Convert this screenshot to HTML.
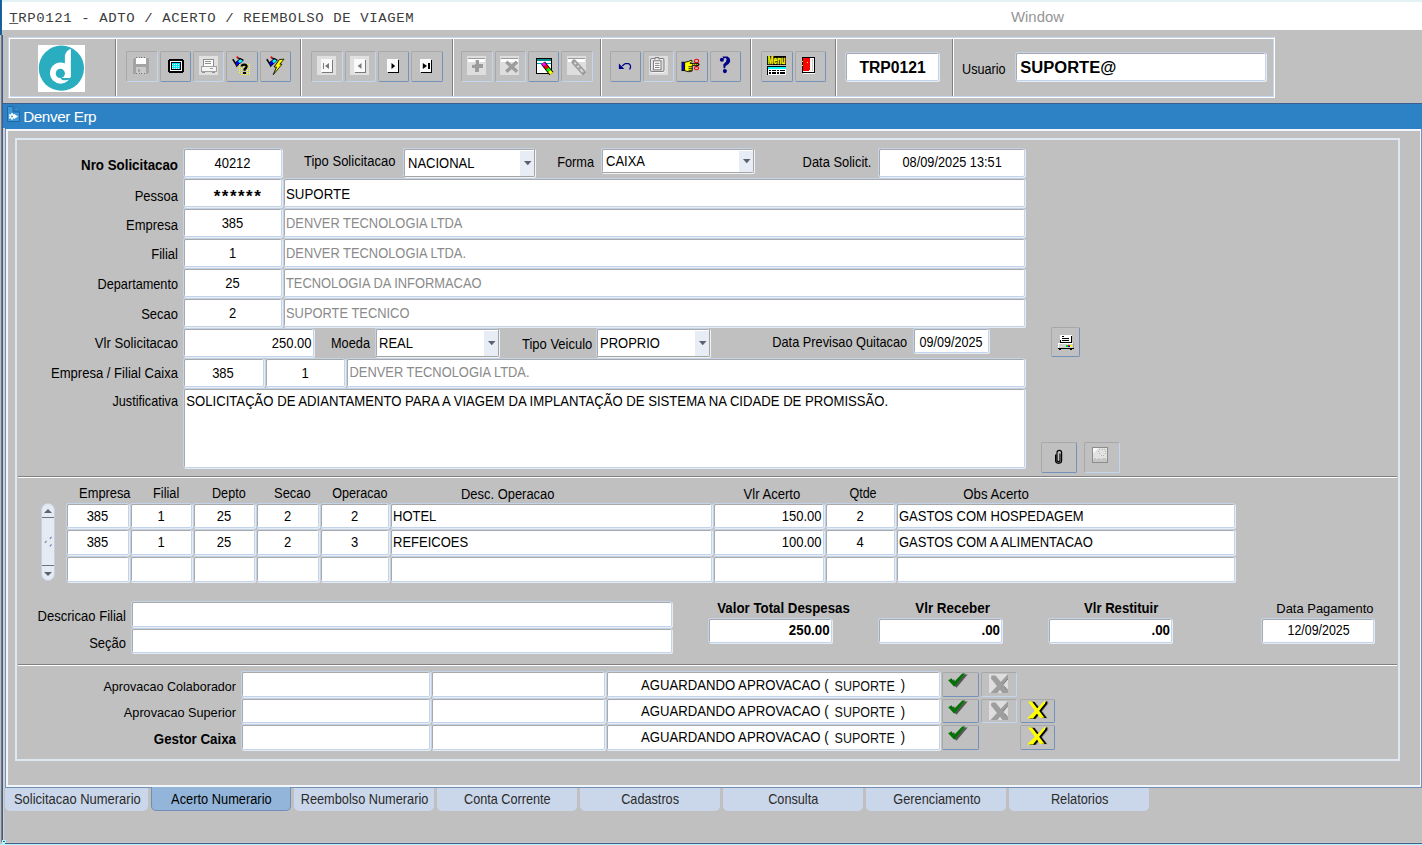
<!DOCTYPE html><html><head><meta charset="utf-8"><style>
*{margin:0;padding:0}
html,body{width:1422px;height:845px;overflow:hidden;background:#c0c0c0;position:relative}
.f{position:absolute;box-sizing:border-box;background:#fff;border:1px solid #c3d3ea;border-radius:2px;box-shadow:inset 1px 1px 0 #a9a9a9, 1px 1px 0 #e6ecf4}
.cb{border-right-color:#a4a4a4;border-bottom-color:#a4a4a4;box-shadow:inset 1px 1px 0 #a9a9a9, 1px 1px 0 #f0f3f8}
.b{position:absolute;box-sizing:border-box;border-radius:2px;border-top:1px solid #a8a8a8;border-left:1px solid #a8a8a8}
.bd{border-right:1px solid #c3d5ef;border-bottom:1px solid #c3d5ef}
.be{border-right:1px solid #7391b9;border-bottom:1px solid #7391b9}
.b svg{position:absolute}
.vs{position:absolute;top:39px;width:1px;height:57px;background:#808080;box-shadow:1px 0 0 #fff}
</style></head><body><div style="position:absolute;left:0px;top:0px;width:1422px;height:2px;background:#e3f3f5"></div>
<div style="position:absolute;left:0px;top:2px;width:1422px;height:28px;background:#fff"></div>
<div style="position:absolute;left:0px;top:0px;width:1px;height:35px;background:#0562b2"></div>
<div style="position:absolute;left:1px;top:0px;width:1px;height:35px;background:#2f5f88"></div>
<div style="position:absolute;left:1px;top:35px;width:1px;height:807px;background:#6c7c90"></div>
<div style="position:absolute;left:0px;top:844px;width:1422px;height:1px;background:#b2f6fd"></div>
<div style="position:absolute;left:3px;top:842px;width:1419px;height:1px;background:#cbc9c6"></div>
<div style="position:absolute;left:2px;top:840px;width:4px;height:4px;background:#b2f6fd"></div>
<div style="position:absolute;left:4px;top:843px;width:1418px;height:1px;background:#3f5d8c"></div>
<div style="position:absolute;top:11.05px;font:normal 14px/14px 'Liberation Mono';color:#3c3c3c;white-space:pre;letter-spacing:0.6px;transform:scaleY(0.85);transform-origin:0 11.85px;left:9.3px"><span style="text-decoration:underline">T</span>RP0121 - ADTO / ACERTO / REEMBOLSO DE VIAGEM</div>
<div style="position:absolute;top:10.29px;font:normal 14.9px/14.9px 'Liberation Sans';color:#959595;white-space:pre;transform:scaleY(1.04);transform-origin:0 12.61px;left:1011px">Window</div>
<div style="position:absolute;left:8px;top:37px;width:1267px;height:61px;box-sizing:border-box;border-top:1px solid #c5d6ee;border-left:1px solid #c5d6ee;border-right:1px solid #fff;border-bottom:1px solid #fff;box-shadow:inset 1px 1px 0 #fff, inset -1px -1px 0 #c5d6ee"></div>
<div class="vs" style="left:115px"></div>
<div class="vs" style="left:300px"></div>
<div class="vs" style="left:452px"></div>
<div class="vs" style="left:600px"></div>
<div class="vs" style="left:750px"></div>
<div class="vs" style="left:835px"></div>
<div class="vs" style="left:952px"></div>
<svg style="position:absolute;left:38px;top:45px" width="47" height="47" viewBox="0 0 47 47">
<rect width="47" height="47" fill="#fff"/>
<circle cx="23.4" cy="23.2" r="22.6" fill="#2badc0"/>
<circle cx="22.6" cy="28.1" r="10.6" fill="#fff"/>
<path d="M26.9,18 L26.9,10.5 Q28.3,5.6 32.9,3.8 L32.9,31 Q32.9,33 30.8,33 L26.9,33 Z" fill="#fff"/>
<rect x="32.9" y="16" width="2" height="15" fill="#2badc0"/>
<circle cx="22.3" cy="28.4" r="4.6" fill="#2badc0"/>
<path d="M22.3,33 L31.5,33 Q32.6,33.2 31.8,34.2 Q28.5,35.8 24.2,34.9 Z" fill="#2badc0"/>
</svg>
<div class="b bd" style="left:126px;top:51px;width:32px;height:31px"></div>
<svg style="position:absolute;left:133px;top:57px;overflow:visible" width="16" height="17" viewBox="0 0 16 17" shape-rendering="crispEdges"><rect x="0" y="1" width="16" height="16" rx="2" fill="#a3a3a3"/><rect x="3" y="1" width="10" height="6" fill="#fff"/><rect x="3" y="10" width="10" height="7" fill="#c9c9c9"/><rect x="5" y="12" width="2" height="3" fill="#a3a3a3"/><path d="M3 0.5h10M3 16.5h10" stroke="#707070" stroke-dasharray="1 1.5"/></svg>
<div class="b be" style="left:160px;top:51px;width:31px;height:31px"></div>
<svg style="position:absolute;left:168px;top:59px;overflow:visible" width="16" height="14" viewBox="0 0 16 14" shape-rendering="crispEdges"><rect x="1" y="1" width="14" height="12" rx="2" fill="#fff" stroke="#000" stroke-width="2"/><rect x="3.5" y="3.5" width="9" height="7" fill="#00e8ff" stroke="#000" stroke-width="1"/><path d="M4 5h8M4 7h8M4 9h8" stroke="#fff" stroke-dasharray="1 1"/></svg>
<div class="b bd" style="left:193px;top:51px;width:31px;height:31px"></div>
<svg style="position:absolute;left:199px;top:56px;overflow:visible" width="19" height="19" viewBox="0 0 19 19" shape-rendering="crispEdges"><rect width="19" height="19" fill="#e0e0e0"/><rect x="4" y="3" width="10" height="7" fill="#fff" stroke="#8c8c8c" stroke-width="1"/><path d="M6 5.5h6M6 7.5h6" stroke="#909090"/><rect x="2" y="10" width="15" height="5" fill="#f4f4f4" stroke="#a0a0a0"/><path d="M3 16h3M13 16h3" stroke="#909090"/><path d="M11 12.5h3" stroke="#a0a0a0"/></svg>
<div class="b be" style="left:226px;top:51px;width:32px;height:31px"></div>
<svg style="position:absolute;left:227px;top:51px;overflow:visible" width="31" height="31" viewBox="0 0 31 31" shape-rendering="crispEdges"><g shape-rendering="auto"><path d="M5.8 8.2 L8.6 12.6" stroke="#000" stroke-width="1.6"/><path d="M8.2 12 L9.6 15.6 L16.2 9.2 L13.2 7.6 Z" fill="#0000ff" stroke="#000" stroke-width="1"/><path d="M11.2 10.2 L13.4 8 L15.8 9.4 L12.8 12.2 Z" fill="#00ffff"/><path d="M10 6.6 L13.4 7.8 L16.4 9.2" fill="none" stroke="#000" stroke-width="1.2"/><circle cx="10.4" cy="6.3" r="1" fill="#ff0000"/></g><rect x="12" y="13" width="1" height="1" fill="#ffff00"/><rect x="12" y="15" width="1" height="1" fill="#ffff00"/><rect x="12" y="17" width="1" height="1" fill="#ffff00"/><rect x="12" y="19" width="1" height="1" fill="#ffff00"/><rect x="12" y="21" width="1" height="1" fill="#ffff00"/><rect x="14" y="13" width="1" height="1" fill="#ffff00"/><rect x="14" y="15" width="1" height="1" fill="#ffff00"/><rect x="14" y="17" width="1" height="1" fill="#ffff00"/><rect x="14" y="19" width="1" height="1" fill="#ffff00"/><rect x="14" y="21" width="1" height="1" fill="#ffff00"/><rect x="14" y="23" width="1" height="1" fill="#ffff00"/><rect x="16" y="13" width="1" height="1" fill="#ffff00"/><rect x="16" y="15" width="1" height="1" fill="#ffff00"/><rect x="16" y="17" width="1" height="1" fill="#ffff00"/><rect x="16" y="19" width="1" height="1" fill="#ffff00"/><rect x="16" y="21" width="1" height="1" fill="#ffff00"/><rect x="16" y="23" width="1" height="1" fill="#ffff00"/><rect x="18" y="13" width="1" height="1" fill="#ffff00"/><rect x="18" y="15" width="1" height="1" fill="#ffff00"/><rect x="18" y="17" width="1" height="1" fill="#ffff00"/><rect x="18" y="19" width="1" height="1" fill="#ffff00"/><rect x="18" y="21" width="1" height="1" fill="#ffff00"/><rect x="18" y="23" width="1" height="1" fill="#ffff00"/><rect x="20" y="13" width="1" height="1" fill="#ffff00"/><rect x="20" y="15" width="1" height="1" fill="#ffff00"/><rect x="20" y="17" width="1" height="1" fill="#ffff00"/><rect x="20" y="19" width="1" height="1" fill="#ffff00"/><rect x="20" y="21" width="1" height="1" fill="#ffff00"/><rect x="20" y="23" width="1" height="1" fill="#ffff00"/><rect x="22" y="13" width="1" height="1" fill="#ffff00"/><rect x="22" y="15" width="1" height="1" fill="#ffff00"/><rect x="22" y="17" width="1" height="1" fill="#ffff00"/><rect x="22" y="19" width="1" height="1" fill="#ffff00"/><rect x="22" y="21" width="1" height="1" fill="#ffff00"/><rect x="22" y="23" width="1" height="1" fill="#ffff00"/><path d="M14.8 15.6 Q14.8 13.6 17.2 13.6 Q19.6 13.6 19.6 15.6 Q19.6 17 17.6 18.2 L17.6 19.8" fill="none" stroke="#000" stroke-width="2.3" shape-rendering="auto"/><rect x="16.4" y="21" width="2.4" height="2" fill="#000"/></svg>
<div class="b be" style="left:260px;top:51px;width:31px;height:31px"></div>
<svg style="position:absolute;left:261px;top:51px;overflow:visible" width="31" height="31" viewBox="0 0 31 31" shape-rendering="crispEdges"><g shape-rendering="auto"><path d="M5.8 8.2 L8.6 12.6" stroke="#000" stroke-width="1.6"/><path d="M8.2 12 L9.6 15.6 L16.2 9.2 L13.2 7.6 Z" fill="#0000ff" stroke="#000" stroke-width="1"/><path d="M11.2 10.2 L13.4 8 L15.8 9.4 L12.8 12.2 Z" fill="#00ffff"/><path d="M10 6.6 L13.4 7.8 L16.4 9.2" fill="none" stroke="#000" stroke-width="1.2"/><circle cx="10.4" cy="6.3" r="1" fill="#ff0000"/></g><g shape-rendering="auto"><path d="M17.5 8.5 L22 8.2 L17.8 13.2 L20 13.2 L11.3 23.7 L14.6 16 L12.2 16 Z" fill="#909090"/><path d="M18.5 8.5 L23 8.2 L18.8 13.2 L21 13.2 L12.3 23.7 L15.6 16 L13.2 16 Z" fill="#ffff00" stroke="#000" stroke-width="0.8"/></g></svg>
<div class="b bd" style="left:311px;top:51px;width:32px;height:31px"></div>
<svg style="position:absolute;left:317px;top:56px;overflow:visible" width="19" height="19" viewBox="0 0 19 19" shape-rendering="crispEdges"><rect width="19" height="19" fill="#e0e0e0"/><rect x="5" y="4" width="11" height="13" fill="#7a7a7a"/><rect x="4" y="3" width="11" height="13" fill="#fafafa"/><rect x="6" y="7" width="1" height="6" fill="#7a7a7a"/><g shape-rendering="auto"><path d="M12 7 L8 10 L12 13 Z" fill="#7a7a7a"/></g></svg>
<div class="b bd" style="left:345px;top:51px;width:31px;height:31px"></div>
<svg style="position:absolute;left:350px;top:56px;overflow:visible" width="19" height="19" viewBox="0 0 19 19" shape-rendering="crispEdges"><rect width="19" height="19" fill="#e0e0e0"/><rect x="5" y="4" width="11" height="13" fill="#7a7a7a"/><rect x="4" y="3" width="11" height="13" fill="#fafafa"/><g shape-rendering="auto"><path d="M11.5 7 L7.7 10 L11.5 13 Z" fill="#7a7a7a"/></g></svg>
<div class="b be" style="left:378px;top:51px;width:31px;height:31px"></div>
<svg style="position:absolute;left:383px;top:56px;overflow:visible" width="19" height="19" viewBox="0 0 19 19" shape-rendering="crispEdges"><rect x="5" y="4" width="11" height="13" fill="#000"/><rect x="4" y="3" width="11" height="13" fill="#fafafa"/><g shape-rendering="auto"><path d="M8.5 7 L12.2 10 L8.5 13 Z" fill="#000"/></g></svg>
<div class="b be" style="left:411px;top:51px;width:32px;height:31px"></div>
<svg style="position:absolute;left:416px;top:56px;overflow:visible" width="19" height="19" viewBox="0 0 19 19" shape-rendering="crispEdges"><rect x="5" y="4" width="11" height="13" fill="#000"/><rect x="4" y="3" width="11" height="13" fill="#fafafa"/><g shape-rendering="auto"><path d="M6.8 7 L11 10 L6.8 13 Z" fill="#000"/></g><rect x="12" y="7" width="1.5" height="6" fill="#000"/></svg>
<div class="b bd" style="left:461px;top:51px;width:32px;height:31px"></div>
<svg style="position:absolute;left:467px;top:56px;overflow:visible" width="19" height="19" viewBox="0 0 19 19" shape-rendering="crispEdges"><rect width="19" height="19" fill="#dedede"/><rect x="1" y="2" width="17" height="4" fill="#fff"/><rect x="1" y="2" width="17" height="1" fill="#9c9c9c"/><rect x="5" y="8" width="11" height="4" fill="#9c9c9c"/><rect x="8" y="4" width="4" height="12" fill="#9c9c9c"/><rect x="5" y="8" width="3" height="1" fill="#d4d4d4"/><rect x="8" y="4" width="1" height="4" fill="#d4d4d4"/></svg>
<div class="b bd" style="left:495px;top:51px;width:31px;height:31px"></div>
<svg style="position:absolute;left:500px;top:56px;overflow:visible" width="19" height="19" viewBox="0 0 19 19" shape-rendering="crispEdges"><rect width="19" height="19" fill="#dedede"/><rect x="1" y="2" width="17" height="4" fill="#fff"/><rect x="1" y="2" width="17" height="1" fill="#9c9c9c"/><path d="M7.5 7 L15.8 14.6 M15.8 7 L7.5 14.6" stroke="#9c9c9c" stroke-width="3.4" stroke-linecap="square" shape-rendering="auto"/></svg>
<div class="b be" style="left:528px;top:51px;width:31px;height:31px"></div>
<svg style="position:absolute;left:535px;top:58px;overflow:visible" width="19" height="19" viewBox="0 0 19 19" shape-rendering="crispEdges"><rect x="1" y="0.5" width="15" height="14.5" fill="#fff" stroke="#000"/><rect x="1.5" y="1" width="14" height="2.3" fill="#008b8b"/><rect x="1.5" y="4.8" width="14" height="1.5" fill="#00a0a0"/><g shape-rendering="auto"><path d="M8 5 L16.5 15.6" stroke="#000" stroke-width="5"/><path d="M8 5 L10.2 7.8" stroke="#ff00ff" stroke-width="3.3"/><path d="M10.2 7.8 L12.4 10.5" stroke="#ff0000" stroke-width="3.3"/><path d="M12.4 10.5 L14.4 13" stroke="#00ff00" stroke-width="3.3"/><path d="M14.4 13 L16.6 15.8" stroke="#ffff00" stroke-width="3.3"/></g></svg>
<div class="b bd" style="left:561px;top:51px;width:32px;height:31px"></div>
<svg style="position:absolute;left:567px;top:56px;overflow:visible" width="19" height="19" viewBox="0 0 19 19" shape-rendering="crispEdges"><rect width="19" height="19" fill="#dedede"/><rect x="1" y="2" width="17" height="4" fill="#fff"/><rect x="1" y="2" width="17" height="1" fill="#9c9c9c"/><g shape-rendering="auto"><path d="M7 6 L16.5 16.5" stroke="#9c9c9c" stroke-width="5" stroke-linecap="round"/><path d="M7.5 6.5 L16 16" stroke="#d8d8d8" stroke-width="2"/><path d="M9 8 L10.5 9.8 M12 11.2 L13.5 13" stroke="#9c9c9c" stroke-width="2.2"/></g></svg>
<div class="b be" style="left:610px;top:51px;width:31px;height:31px"></div>
<svg style="position:absolute;left:610px;top:51px;overflow:visible" width="31" height="31" viewBox="0 0 31 31" shape-rendering="crispEdges"><g shape-rendering="auto"><path d="M12.3 14.9 L14.6 13 L15.5 12.5 H18.7 L20.2 14 L20.6 16.2 L19.6 18.5" fill="none" stroke="#00008a" stroke-width="1.25"/><path d="M8.9 12.6 V18.1 H14.3 Z" fill="#00008a"/></g></svg>
<div class="b bd" style="left:643px;top:51px;width:31px;height:31px"></div>
<svg style="position:absolute;left:649px;top:56px;overflow:visible" width="19" height="19" viewBox="0 0 19 19" shape-rendering="crispEdges"><rect width="19" height="19" fill="#dedede"/><g shape-rendering="auto"><rect x="1.5" y="2.5" width="13.5" height="13" rx="1.5" fill="none" stroke="#fafafa" transform="translate(0.8,0.8)"/><rect x="1.5" y="2.5" width="13.5" height="13" rx="1.5" fill="none" stroke="#808080" stroke-width="1.1"/><path d="M5.5 3.5 L6.5 1.5 H9.5 L10.5 3.5" fill="#dedede" stroke="#808080" stroke-width="1.1"/><rect x="4.5" y="4.8" width="7.5" height="9" fill="#fff" stroke="#808080" stroke-width="1.1"/><path d="M6 7.3h4.5M6 9.4h4.5M6 11.5h4.5" stroke="#808080" stroke-width="1"/></g></svg>
<div class="b be" style="left:676px;top:51px;width:32px;height:31px"></div>
<svg style="position:absolute;left:681px;top:58px;overflow:visible" width="22" height="15" viewBox="0 0 22 15" shape-rendering="crispEdges"><g shape-rendering="auto"><rect x="1" y="4.2" width="2.4" height="8.4" fill="#0000ff" stroke="#000" stroke-width="0.9"/><path d="M3.6 4.6 Q5.2 3.6 7.2 3.6 L10.4 2.1 L11.2 3.2 L9 5.4 H17.6 V7.4 H11.2 V13 Q9.2 13.9 7.2 13.6 Q5.2 13.2 3.6 12.6 Z" fill="#ffff00" stroke="#000" stroke-width="0.9"/><path d="M7.5 8.7h3.7M7.5 10.6h3.7M7.5 12.4h3.2" stroke="#000" stroke-width="0.8"/><path d="M11.2 6.4 H17.5" stroke="#000" stroke-width="0.7" stroke-dasharray="1 1"/><ellipse cx="15.5" cy="3.1" rx="2.1" ry="1.8" fill="none" stroke="#f00" stroke-width="1.05"/><ellipse cx="15.5" cy="10.2" rx="2.1" ry="1.6" fill="none" stroke="#f00" stroke-width="1.05"/><path d="M14.8 4.8 L18.3 6.5 L14.8 8.6" fill="none" stroke="#000" stroke-width="0.8"/></g></svg>
<div class="b be" style="left:710px;top:51px;width:31px;height:31px"></div>
<svg style="position:absolute;left:711px;top:51px;overflow:visible" width="31" height="31" viewBox="0 0 31 31" shape-rendering="crispEdges"><g shape-rendering="auto" fill="#000088"><path d="M11.6 5.6 L16.6 5.6 L18.8 7.4 L19.2 10.5 L17.6 12.9 L14.6 14.9 L14.1 17.2 L12.6 17.2 L12.3 13.6 L15.1 10.6 L15.6 8 L14.6 6.9 L12.2 7.6 Z"/><circle cx="10.9" cy="8.8" r="2.05"/><circle cx="13.9" cy="20.1" r="2.05"/></g></svg>
<div class="b be" style="left:761px;top:51px;width:32px;height:31px"></div>
<svg style="position:absolute;left:767px;top:56px;overflow:visible" width="19" height="19" viewBox="0 0 19 19" shape-rendering="crispEdges"><rect x="0" y="0" width="19" height="9" fill="#000"/><text x="0.8" y="8.2" font-family="Liberation Sans" font-weight="bold" font-size="10" fill="#ffff00" stroke="#ffff00" stroke-width="0.35" textLength="17.6" lengthAdjust="spacingAndGlyphs">Menu</text><rect x="0" y="10" width="19" height="9" fill="#fff"/><path d="M0 10.5h19" stroke="#000"/><rect x="1" y="11" width="18" height="1.5" fill="#00ffff"/><rect x="0" y="10" width="1" height="9" fill="#000"/><path d="M2 14.5h2M5 14.5h4M10 14.5h2M13 14.5h5M2 17h2M5 17h4M10 17h2M13 17h5" stroke="#000" stroke-width="1.4"/></svg>
<div class="b be" style="left:795px;top:51px;width:31px;height:31px"></div>
<svg style="position:absolute;left:802px;top:57px;overflow:visible" width="14" height="17" viewBox="0 0 14 17" shape-rendering="crispEdges"><rect x="0.5" y="0.5" width="12" height="15" fill="#fff" stroke="#000"/><rect x="10" y="2" width="1" height="12" fill="#c8c8c8"/><path d="M1 1 L8 1 L8 12 L6 14 L1 14 Z" fill="#ff0000"/><rect x="5" y="5" width="1" height="1" fill="#ffff00"/><rect x="0" y="4" width="1" height="1" fill="#ffff00"/><rect x="0" y="8" width="1" height="1" fill="#ffff00"/><rect x="1" y="16" width="12" height="1" fill="#fff"/></svg>
<div class="f" style="left:845px;top:52px;width:94px;height:29px"></div>
<div style="position:absolute;top:60.19px;font:bold 15.72px/15.72px 'Liberation Sans';color:#000;white-space:pre;transform:scaleY(1.04);transform-origin:0 13.31px;left:592.6px;width:600px;text-align:center">TRP0121</div>
<div style="position:absolute;top:64.29px;font:normal 12.65px/12.65px 'Liberation Sans';color:#000;white-space:pre;transform:scaleY(1.116);transform-origin:0 10.71px;left:962px">Usuario</div>
<div class="f" style="left:1015px;top:52px;width:251px;height:29px"></div>
<div style="position:absolute;top:59.50px;font:bold 16.54px/16.54px 'Liberation Sans';color:#000;white-space:pre;transform:scaleY(1.04);transform-origin:0 14.00px;left:1020.3px">SUPORTE@</div>
<div style="position:absolute;left:2px;top:103px;width:1420px;height:26px;background:#2c82c4;box-shadow:inset 0 1px 0 #3c5f8e"></div>
<svg style="position:absolute;left:7px;top:106px;overflow:visible" width="13" height="16" viewBox="0 0 13 16" shape-rendering="crispEdges"><g shape-rendering="auto"><path d="M0.5 0.5 H6 V6 H12.5 V15.5 H0.5 Z" fill="#3d9ad6" stroke="#2466a2" stroke-width="1"/><path d="M8.1 0.6 L12.2 4.7 L8.1 4.7 Z" fill="#3d9ad6" stroke="#2466a2" stroke-width="0.6"/><path d="M4.37 6.96 L5.63 6.96 L5.84 8.05 L6.62 8.49 L7.67 8.14 L8.30 9.22 L7.46 9.95 L7.46 10.85 L8.30 11.58 L7.67 12.66 L6.62 12.31 L5.84 12.75 L5.63 13.84 L4.37 13.84 L4.16 12.75 L3.38 12.31 L2.33 12.66 L1.70 11.58 L2.54 10.85 L2.54 9.95 L1.70 9.22 L2.33 8.14 L3.38 8.49 L4.16 8.05 Z" fill="#fff"/><circle cx="5.0" cy="10.4" r="1" fill="#3d9ad6"/><path d="M7.1 7.9 L11.1 10.4 L7.1 12.9 Z" fill="#fff"/></g></svg>
<div style="position:absolute;top:109.05px;font:normal 15.3px/15.3px 'Liberation Sans';color:#fff;white-space:pre;letter-spacing:-0.44px;left:23.2px">Denver Erp</div>
<div style="position:absolute;left:2px;top:35px;width:1px;height:805px;background:#3f5d8c"></div>
<div style="position:absolute;left:3px;top:128px;width:2px;height:660px;background:#d2cfcb"></div>
<div style="position:absolute;left:3px;top:788px;width:1px;height:54px;background:#d2cfcb"></div>
<div style="position:absolute;left:2px;top:840px;width:3px;height:4px;background:#b2f6fd"></div>
<div style="position:absolute;left:3px;top:841px;width:2px;height:1px;background:#3f5d8c"></div>
<div style="position:absolute;left:2px;top:844px;width:1420px;height:1px;background:#b2f6fd"></div>
<div style="position:absolute;left:5px;top:129px;width:1417px;height:659px;box-sizing:border-box;border-left:1px solid #7392ba;border-bottom:1px solid #7392ba;border-right:1px solid #7392ba;box-shadow:inset 2px 2px 0 #f2f6fb, inset -1px -2px 0 #f2f6fb"></div>
<div style="position:absolute;left:15px;top:138px;width:1385px;height:623px;box-sizing:border-box;border:2px solid #dfe7f3;box-shadow:inset 1px 1px 0 #c0c0c0"></div>
<div style="position:absolute;left:18px;top:476px;width:1379px;height:1px;background:#808080;box-shadow:0 1px 0 #fff"></div>
<div style="position:absolute;left:18px;top:664px;width:1379px;height:1px;background:#808080;box-shadow:0 1px 0 #fff"></div>
<div style="position:absolute;top:158.72px;font:bold 13.32px/13.32px 'Liberation Sans';color:#000;white-space:pre;transform:scaleY(1.09);transform-origin:0 11.28px;right:1244px">Nro Solicitacao</div>
<div class="f" style="left:183px;top:148px;width:99px;height:29px"></div>
<div style="position:absolute;top:157.00px;font:normal 13px/13px 'Liberation Sans';color:#000;white-space:pre;transform:scaleY(1.086);transform-origin:0 11.00px;left:-67.5px;width:600px;text-align:center">40212</div>
<div style="position:absolute;top:155.28px;font:normal 13.02px/13.02px 'Liberation Sans';color:#000;white-space:pre;transform:scaleY(1.084);transform-origin:0 11.02px;left:304px">Tipo Solicitacao</div>
<div class="f cb" style="left:403px;top:148px;width:132px;height:29px"></div>
<div style="position:absolute;left:520px;top:151px;width:14px;height:25px;background:#e8ecf4"></div>
<svg style="position:absolute;left:524px;top:160.5px;overflow:visible" width="8" height="5" viewBox="0 0 8 5" shape-rendering="crispEdges"><path d="M0 0 H7.5 L3.75 4.2 Z" fill="#5c6072" shape-rendering="auto"/></svg>
<div style="position:absolute;top:157.00px;font:normal 13px/13px 'Liberation Sans';color:#000;white-space:pre;transform:scaleY(1.086);transform-origin:0 11.00px;left:408px">NACIONAL</div>
<div style="position:absolute;top:157.19px;font:normal 12.77px/12.77px 'Liberation Sans';color:#000;white-space:pre;transform:scaleY(1.106);transform-origin:0 10.81px;left:557.2px">Forma</div>
<div class="f cb" style="left:601px;top:148px;width:153px;height:25px"></div>
<div style="position:absolute;left:739px;top:151px;width:14px;height:21px;background:#e8ecf4"></div>
<svg style="position:absolute;left:743px;top:158.5px;overflow:visible" width="8" height="5" viewBox="0 0 8 5" shape-rendering="crispEdges"><path d="M0 0 H7.5 L3.75 4.2 Z" fill="#5c6072" shape-rendering="auto"/></svg>
<div style="position:absolute;top:155.00px;font:normal 13px/13px 'Liberation Sans';color:#000;white-space:pre;transform:scaleY(1.086);transform-origin:0 11.00px;left:606px">CAIXA</div>
<div style="position:absolute;top:156.57px;font:normal 12.91px/12.91px 'Liberation Sans';color:#000;white-space:pre;transform:scaleY(1.094);transform-origin:0 10.93px;left:802.6px">Data Solicit.</div>
<div class="f" style="left:878px;top:148px;width:147px;height:29px"></div>
<div style="position:absolute;top:156.71px;font:normal 12.75px/12.75px 'Liberation Sans';color:#000;white-space:pre;transform:scaleY(1.107);transform-origin:0 10.79px;left:902.5px">08/09/2025 13:51</div>
<div style="position:absolute;top:189.80px;font:normal 13px/13px 'Liberation Sans';color:#000;white-space:pre;transform:scaleY(1.086);transform-origin:0 11.00px;right:1244px">Pessoa</div>
<div class="f" style="left:183px;top:178px;width:99px;height:29px"></div>
<div class="f" style="left:283px;top:178px;width:742px;height:29px"></div>
<div style="position:absolute;top:188.01px;font:bold 17px/17px 'Liberation Sans';color:#000;white-space:pre;letter-spacing:1.45px;left:-62px;width:600px;text-align:center">******</div>
<div style="position:absolute;top:188.24px;font:normal 13.3px/13.3px 'Liberation Sans';color:#000;white-space:pre;transform:scaleY(1.062);transform-origin:0 11.26px;left:286px">SUPORTE</div>
<div style="position:absolute;top:219.20px;font:normal 13px/13px 'Liberation Sans';color:#000;white-space:pre;transform:scaleY(1.086);transform-origin:0 11.00px;right:1244px">Empresa</div>
<div class="f" style="left:183px;top:208px;width:99px;height:29px"></div>
<div class="f" style="left:283px;top:208px;width:742px;height:29px"></div>
<div style="position:absolute;top:217.00px;font:normal 13px/13px 'Liberation Sans';color:#000;white-space:pre;transform:scaleY(1.086);transform-origin:0 11.00px;left:-67.5px;width:600px;text-align:center">385</div>
<div style="position:absolute;top:217.88px;font:normal 12.9px/12.9px 'Liberation Sans';color:#8a8a8a;white-space:pre;transform:scaleY(1.095);transform-origin:0 10.92px;left:286px">DENVER TECNOLOGIA LTDA</div>
<div style="position:absolute;top:247.80px;font:normal 13px/13px 'Liberation Sans';color:#000;white-space:pre;transform:scaleY(1.086);transform-origin:0 11.00px;right:1244px">Filial</div>
<div class="f" style="left:183px;top:238px;width:99px;height:29px"></div>
<div class="f" style="left:283px;top:238px;width:742px;height:29px"></div>
<div style="position:absolute;top:247.00px;font:normal 13px/13px 'Liberation Sans';color:#000;white-space:pre;transform:scaleY(1.086);transform-origin:0 11.00px;left:-67.5px;width:600px;text-align:center">1</div>
<div style="position:absolute;top:247.88px;font:normal 12.9px/12.9px 'Liberation Sans';color:#8a8a8a;white-space:pre;transform:scaleY(1.095);transform-origin:0 10.92px;left:286px">DENVER TECNOLOGIA LTDA.</div>
<div style="position:absolute;top:279.45px;font:normal 12.7px/12.7px 'Liberation Sans';color:#000;white-space:pre;transform:scaleY(1.112);transform-origin:0 10.75px;right:1244px">Departamento</div>
<div class="f" style="left:183px;top:268px;width:99px;height:29px"></div>
<div class="f" style="left:283px;top:268px;width:742px;height:29px"></div>
<div style="position:absolute;top:277.00px;font:normal 13px/13px 'Liberation Sans';color:#000;white-space:pre;transform:scaleY(1.086);transform-origin:0 11.00px;left:-67.5px;width:600px;text-align:center">25</div>
<div style="position:absolute;top:277.88px;font:normal 12.9px/12.9px 'Liberation Sans';color:#8a8a8a;white-space:pre;transform:scaleY(1.095);transform-origin:0 10.92px;left:286px">TECNOLOGIA DA INFORMACAO</div>
<div style="position:absolute;top:307.80px;font:normal 13px/13px 'Liberation Sans';color:#000;white-space:pre;transform:scaleY(1.086);transform-origin:0 11.00px;right:1244px">Secao</div>
<div class="f" style="left:183px;top:298px;width:99px;height:29px"></div>
<div class="f" style="left:283px;top:298px;width:742px;height:29px"></div>
<div style="position:absolute;top:307.00px;font:normal 13px/13px 'Liberation Sans';color:#000;white-space:pre;transform:scaleY(1.086);transform-origin:0 11.00px;left:-67.5px;width:600px;text-align:center">2</div>
<div style="position:absolute;top:307.88px;font:normal 12.9px/12.9px 'Liberation Sans';color:#8a8a8a;white-space:pre;transform:scaleY(1.095);transform-origin:0 10.92px;left:286px">SUPORTE TECNICO</div>
<div style="position:absolute;top:337.29px;font:normal 13.13px/13.13px 'Liberation Sans';color:#000;white-space:pre;transform:scaleY(1.075);transform-origin:0 11.11px;right:1244px">Vlr Solicitacao</div>
<div class="f" style="left:183px;top:328px;width:131px;height:29px"></div>
<div style="position:absolute;top:336.60px;font:normal 13px/13px 'Liberation Sans';color:#000;white-space:pre;transform:scaleY(1.086);transform-origin:0 11.00px;right:1110.5px">250.00</div>
<div style="position:absolute;top:338.01px;font:normal 12.75px/12.75px 'Liberation Sans';color:#000;white-space:pre;transform:scaleY(1.107);transform-origin:0 10.79px;left:331px">Moeda</div>
<div class="f cb" style="left:375px;top:328px;width:124px;height:29px"></div>
<div style="position:absolute;left:484px;top:331px;width:14px;height:25px;background:#e8ecf4"></div>
<svg style="position:absolute;left:488px;top:340.5px;overflow:visible" width="8" height="5" viewBox="0 0 8 5" shape-rendering="crispEdges"><path d="M0 0 H7.5 L3.75 4.2 Z" fill="#5c6072" shape-rendering="auto"/></svg>
<div style="position:absolute;top:337.00px;font:normal 13px/13px 'Liberation Sans';color:#000;white-space:pre;transform:scaleY(1.086);transform-origin:0 11.00px;left:379px">REAL</div>
<div style="position:absolute;top:338.49px;font:normal 13.01px/13.01px 'Liberation Sans';color:#000;white-space:pre;transform:scaleY(1.085);transform-origin:0 11.01px;left:522px">Tipo Veiculo</div>
<div class="f cb" style="left:596px;top:328px;width:114px;height:29px"></div>
<div style="position:absolute;left:695px;top:331px;width:14px;height:25px;background:#e8ecf4"></div>
<svg style="position:absolute;left:699px;top:340.5px;overflow:visible" width="8" height="5" viewBox="0 0 8 5" shape-rendering="crispEdges"><path d="M0 0 H7.5 L3.75 4.2 Z" fill="#5c6072" shape-rendering="auto"/></svg>
<div style="position:absolute;top:337.00px;font:normal 13px/13px 'Liberation Sans';color:#000;white-space:pre;transform:scaleY(1.086);transform-origin:0 11.00px;left:600px">PROPRIO</div>
<div style="position:absolute;top:336.68px;font:normal 12.78px/12.78px 'Liberation Sans';color:#000;white-space:pre;transform:scaleY(1.105);transform-origin:0 10.82px;left:772.3px">Data Previsao Quitacao</div>
<div class="f" style="left:913px;top:328px;width:76px;height:25px"></div>
<div style="position:absolute;top:336.84px;font:normal 12.59px/12.59px 'Liberation Sans';color:#000;white-space:pre;transform:scaleY(1.121);transform-origin:0 10.66px;left:919.5px">09/09/2025</div>
<div class="b be" style="left:1051px;top:327px;width:29px;height:30px"></div>
<svg style="position:absolute;left:1051px;top:327px;overflow:visible" width="29" height="30" viewBox="0 0 29 30" shape-rendering="crispEdges"><rect x="9" y="8" width="12" height="8" fill="#fff"/><path d="M20.5 9 V15.5 H9.5 V13" stroke="#000" fill="none"/><path d="M11 9.5h2M11 11.5h6.5M11 13.5h6.5" stroke="#000"/><rect x="7" y="16" width="16" height="5.5" fill="#fff"/><rect x="8" y="17" width="14" height="3.5" fill="#d0d0d0"/><rect x="22" y="16" width="1" height="5" fill="#a0a0a0"/><rect x="15" y="18" width="2" height="2" fill="#00e000"/><rect x="17" y="18" width="2" height="1" fill="#ff0000"/><rect x="17" y="19" width="2" height="1" fill="#0000ff"/><rect x="19" y="18" width="2" height="1.5" fill="#ffff00"/><path d="M7 21.5h16M8 22.5h2M19 22.5h2" stroke="#000"/></svg>
<div style="position:absolute;top:367.24px;font:normal 13.07px/13.07px 'Liberation Sans';color:#000;white-space:pre;transform:scaleY(1.08);transform-origin:0 11.06px;right:1244px">Empresa / Filial Caixa</div>
<div class="f" style="left:183px;top:358px;width:81px;height:29px"></div>
<div style="position:absolute;top:366.50px;font:normal 13px/13px 'Liberation Sans';color:#000;white-space:pre;transform:scaleY(1.086);transform-origin:0 11.00px;left:-77px;width:600px;text-align:center">385</div>
<div class="f" style="left:265px;top:358px;width:80px;height:29px"></div>
<div style="position:absolute;top:366.50px;font:normal 13px/13px 'Liberation Sans';color:#000;white-space:pre;transform:scaleY(1.086);transform-origin:0 11.00px;left:5px;width:600px;text-align:center">1</div>
<div class="f" style="left:346px;top:358px;width:679px;height:29px"></div>
<div style="position:absolute;top:366.58px;font:normal 12.9px/12.9px 'Liberation Sans';color:#8a8a8a;white-space:pre;transform:scaleY(1.095);transform-origin:0 10.92px;left:349.5px">DENVER TECNOLOGIA LTDA.</div>
<div style="position:absolute;top:395.86px;font:normal 12.69px/12.69px 'Liberation Sans';color:#000;white-space:pre;transform:scaleY(1.113);transform-origin:0 10.74px;right:1244px">Justificativa</div>
<div class="f" style="left:183px;top:388px;width:842px;height:80px"></div>
<div style="position:absolute;top:394.68px;font:normal 13.14px/13.14px 'Liberation Sans';color:#000;white-space:pre;transform:scaleY(1.075);transform-origin:0 11.12px;left:186.3px">SOLICITAÇÃO DE ADIANTAMENTO PARA A VIAGEM DA IMPLANTAÇÃO DE SISTEMA NA CIDADE DE PROMISSÃO.</div>
<div class="b be" style="left:1041px;top:442px;width:36px;height:31px"></div>
<svg style="position:absolute;left:1041px;top:442px;overflow:visible" width="36" height="31" viewBox="0 0 36 31" shape-rendering="crispEdges"><path d="M14.6 12.5 V18.6 Q14.6 21.3 17.6 21.3 Q20.6 21.3 20.6 18.6 V10.6 Q20.6 8.3 18.3 8.3 Q16 8.3 16 10.6 V18.2 Q16 19.6 17.5 19.6 Q19 19.6 19 18.2 V11.5" fill="none" stroke="#000" stroke-width="1.2" shape-rendering="auto"/></svg>
<div class="b bd" style="left:1084px;top:442px;width:36px;height:31px"></div>
<svg style="position:absolute;left:1092px;top:447px;overflow:visible" width="16" height="16" viewBox="0 0 16 16" shape-rendering="crispEdges"><rect x="0.5" y="0.5" width="15" height="15" fill="#e2e2e2" stroke="#8c8c8c"/><path d="M1 1 H6 L3 5 L1 6 Z" fill="#fafafa"/><path d="M1 12 L3 10.5 L5 12.5 L7 10.5 L9 12.5 L11.5 10.5 L15 12 V15 H1 Z" fill="#c6c6c6"/><g fill="#b4b4b4"><rect x="7" y="2" width="1" height="1"/><rect x="10" y="2" width="1" height="1"/><rect x="12" y="2" width="1" height="1"/><rect x="6" y="4" width="1" height="1"/><rect x="13" y="4" width="1" height="1"/><rect x="7" y="6" width="1" height="1"/><rect x="13" y="6" width="1" height="1"/><rect x="9" y="8" width="1" height="1"/><rect x="11" y="8" width="1" height="1"/></g></svg>
<div style="position:absolute;top:487.92px;font:normal 12.85px/12.85px 'Liberation Sans';color:#000;white-space:pre;transform:scaleY(1.099);transform-origin:0 10.88px;left:-195.2px;width:600px;text-align:center">Empresa</div>
<div style="position:absolute;top:487.97px;font:normal 12.79px/12.79px 'Liberation Sans';color:#000;white-space:pre;transform:scaleY(1.104);transform-origin:0 10.83px;left:-133.85px;width:600px;text-align:center">Filial</div>
<div style="position:absolute;top:488.11px;font:normal 12.63px/12.63px 'Liberation Sans';color:#000;white-space:pre;transform:scaleY(1.118);transform-origin:0 10.69px;left:-71.15px;width:600px;text-align:center">Depto</div>
<div style="position:absolute;top:487.85px;font:normal 12.94px/12.94px 'Liberation Sans';color:#000;white-space:pre;transform:scaleY(1.091);transform-origin:0 10.95px;left:-7.649999999999977px;width:600px;text-align:center">Secao</div>
<div style="position:absolute;top:488.14px;font:normal 12.59px/12.59px 'Liberation Sans';color:#000;white-space:pre;transform:scaleY(1.121);transform-origin:0 10.66px;left:59.85000000000002px;width:600px;text-align:center">Operacao</div>
<div style="position:absolute;top:489.45px;font:normal 12.94px/12.94px 'Liberation Sans';color:#000;white-space:pre;transform:scaleY(1.091);transform-origin:0 10.95px;left:207.75px;width:600px;text-align:center">Desc. Operacao</div>
<div style="position:absolute;top:488.31px;font:normal 13.1px/13.1px 'Liberation Sans';color:#000;white-space:pre;transform:scaleY(1.078);transform-origin:0 11.09px;left:471.9px;width:600px;text-align:center">Vlr Acerto</div>
<div style="position:absolute;top:488.18px;font:normal 12.55px/12.55px 'Liberation Sans';color:#000;white-space:pre;transform:scaleY(1.125);transform-origin:0 10.62px;left:563.0px;width:600px;text-align:center">Qtde</div>
<div style="position:absolute;top:487.59px;font:normal 13.24px/13.24px 'Liberation Sans';color:#000;white-space:pre;transform:scaleY(1.066);transform-origin:0 11.21px;left:696.05px;width:600px;text-align:center">Obs Acerto</div>
<div class="f" style="left:66px;top:503px;width:63px;height:25px"></div>
<div class="f" style="left:130px;top:503px;width:62px;height:25px"></div>
<div class="f" style="left:193px;top:503px;width:62px;height:25px"></div>
<div class="f" style="left:256px;top:503px;width:63px;height:25px"></div>
<div class="f" style="left:320px;top:503px;width:69px;height:25px"></div>
<div class="f" style="left:390px;top:503px;width:322px;height:25px"></div>
<div class="f" style="left:713px;top:503px;width:111px;height:25px"></div>
<div class="f" style="left:825px;top:503px;width:70px;height:25px"></div>
<div class="f" style="left:896px;top:503px;width:339px;height:25px"></div>
<div style="position:absolute;top:509.60px;font:normal 13px/13px 'Liberation Sans';color:#000;white-space:pre;transform:scaleY(1.086);transform-origin:0 11.00px;left:-202.5px;width:600px;text-align:center">385</div>
<div style="position:absolute;top:509.60px;font:normal 13px/13px 'Liberation Sans';color:#000;white-space:pre;transform:scaleY(1.086);transform-origin:0 11.00px;left:-139.0px;width:600px;text-align:center">1</div>
<div style="position:absolute;top:509.60px;font:normal 13px/13px 'Liberation Sans';color:#000;white-space:pre;transform:scaleY(1.086);transform-origin:0 11.00px;left:-76.0px;width:600px;text-align:center">25</div>
<div style="position:absolute;top:509.60px;font:normal 13px/13px 'Liberation Sans';color:#000;white-space:pre;transform:scaleY(1.086);transform-origin:0 11.00px;left:-12.5px;width:600px;text-align:center">2</div>
<div style="position:absolute;top:509.60px;font:normal 13px/13px 'Liberation Sans';color:#000;white-space:pre;transform:scaleY(1.086);transform-origin:0 11.00px;left:54.5px;width:600px;text-align:center">2</div>
<div style="position:absolute;top:509.60px;font:normal 13px/13px 'Liberation Sans';color:#000;white-space:pre;transform:scaleY(1.086);transform-origin:0 11.00px;left:393px">HOTEL</div>
<div style="position:absolute;top:509.60px;font:normal 13px/13px 'Liberation Sans';color:#000;white-space:pre;transform:scaleY(1.086);transform-origin:0 11.00px;right:600.5px">150.00</div>
<div style="position:absolute;top:509.60px;font:normal 13px/13px 'Liberation Sans';color:#000;white-space:pre;transform:scaleY(1.086);transform-origin:0 11.00px;left:560.0px;width:600px;text-align:center">2</div>
<div style="position:absolute;top:509.60px;font:normal 13px/13px 'Liberation Sans';color:#000;white-space:pre;transform:scaleY(1.086);transform-origin:0 11.00px;left:899px">GASTOS COM HOSPEDAGEM</div>
<div class="f" style="left:66px;top:529px;width:63px;height:26px"></div>
<div class="f" style="left:130px;top:529px;width:62px;height:26px"></div>
<div class="f" style="left:193px;top:529px;width:62px;height:26px"></div>
<div class="f" style="left:256px;top:529px;width:63px;height:26px"></div>
<div class="f" style="left:320px;top:529px;width:69px;height:26px"></div>
<div class="f" style="left:390px;top:529px;width:322px;height:26px"></div>
<div class="f" style="left:713px;top:529px;width:111px;height:26px"></div>
<div class="f" style="left:825px;top:529px;width:70px;height:26px"></div>
<div class="f" style="left:896px;top:529px;width:339px;height:26px"></div>
<div style="position:absolute;top:535.60px;font:normal 13px/13px 'Liberation Sans';color:#000;white-space:pre;transform:scaleY(1.086);transform-origin:0 11.00px;left:-202.5px;width:600px;text-align:center">385</div>
<div style="position:absolute;top:535.60px;font:normal 13px/13px 'Liberation Sans';color:#000;white-space:pre;transform:scaleY(1.086);transform-origin:0 11.00px;left:-139.0px;width:600px;text-align:center">1</div>
<div style="position:absolute;top:535.60px;font:normal 13px/13px 'Liberation Sans';color:#000;white-space:pre;transform:scaleY(1.086);transform-origin:0 11.00px;left:-76.0px;width:600px;text-align:center">25</div>
<div style="position:absolute;top:535.60px;font:normal 13px/13px 'Liberation Sans';color:#000;white-space:pre;transform:scaleY(1.086);transform-origin:0 11.00px;left:-12.5px;width:600px;text-align:center">2</div>
<div style="position:absolute;top:535.60px;font:normal 13px/13px 'Liberation Sans';color:#000;white-space:pre;transform:scaleY(1.086);transform-origin:0 11.00px;left:54.5px;width:600px;text-align:center">3</div>
<div style="position:absolute;top:535.60px;font:normal 13px/13px 'Liberation Sans';color:#000;white-space:pre;transform:scaleY(1.086);transform-origin:0 11.00px;left:393px">REFEICOES</div>
<div style="position:absolute;top:535.60px;font:normal 13px/13px 'Liberation Sans';color:#000;white-space:pre;transform:scaleY(1.086);transform-origin:0 11.00px;right:600.5px">100.00</div>
<div style="position:absolute;top:535.60px;font:normal 13px/13px 'Liberation Sans';color:#000;white-space:pre;transform:scaleY(1.086);transform-origin:0 11.00px;left:560.0px;width:600px;text-align:center">4</div>
<div style="position:absolute;top:535.60px;font:normal 13px/13px 'Liberation Sans';color:#000;white-space:pre;transform:scaleY(1.086);transform-origin:0 11.00px;left:899px">GASTOS COM A ALIMENTACAO</div>
<div class="f" style="left:66px;top:556px;width:63px;height:26px"></div>
<div class="f" style="left:130px;top:556px;width:62px;height:26px"></div>
<div class="f" style="left:193px;top:556px;width:62px;height:26px"></div>
<div class="f" style="left:256px;top:556px;width:63px;height:26px"></div>
<div class="f" style="left:320px;top:556px;width:69px;height:26px"></div>
<div class="f" style="left:390px;top:556px;width:322px;height:26px"></div>
<div class="f" style="left:713px;top:556px;width:111px;height:26px"></div>
<div class="f" style="left:825px;top:556px;width:70px;height:26px"></div>
<div class="f" style="left:896px;top:556px;width:339px;height:26px"></div>
<div style="position:absolute;left:41px;top:503px;width:14px;height:78px;box-sizing:border-box;background:#e6ebf3;border:1px solid #c3d1e6;border-radius:7px"></div>
<div style="position:absolute;left:42px;top:517px;width:12px;height:1px;background:#6c7484"></div>
<div style="position:absolute;left:42px;top:565px;width:12px;height:1px;background:#6c7484"></div>
<svg style="position:absolute;left:42px;top:508px;overflow:visible" width="12" height="6" viewBox="0 0 12 6" shape-rendering="crispEdges"><path d="M2 5 L6 1 L10 5 Z" fill="#5c6272" shape-rendering="auto"/></svg>
<svg style="position:absolute;left:42px;top:571px;overflow:visible" width="12" height="6" viewBox="0 0 12 6" shape-rendering="crispEdges"><path d="M2 1 L6 5 L10 1 Z" fill="#5c6272" shape-rendering="auto"/></svg>
<svg style="position:absolute;left:42px;top:534px;overflow:visible" width="12" height="14" viewBox="0 0 12 14" shape-rendering="crispEdges"><path d="M7.8 4.8 L9.6 3 M2.8 8.8 L4.6 7 M7.8 12.3 L9.6 10.5" stroke="#6f86ad" stroke-width="1.1" shape-rendering="auto"/></svg>
<div style="position:absolute;top:610.05px;font:normal 13.05px/13.05px 'Liberation Sans';color:#000;white-space:pre;transform:scaleY(1.082);transform-origin:0 11.05px;right:1296px">Descricao Filial</div>
<div class="f" style="left:131px;top:601px;width:541px;height:26px"></div>
<div style="position:absolute;top:637.30px;font:normal 13px/13px 'Liberation Sans';color:#000;white-space:pre;transform:scaleY(1.086);transform-origin:0 11.00px;right:1296px">Seção</div>
<div class="f" style="left:131px;top:628px;width:541px;height:25px"></div>
<div style="position:absolute;top:602.25px;font:bold 13.29px/13.29px 'Liberation Sans';color:#000;white-space:pre;transform:scaleY(1.08);transform-origin:0 11.25px;left:483.54999999999995px;width:600px;text-align:center">Valor Total Despesas</div>
<div class="f" style="left:708px;top:618px;width:124px;height:25px"></div>
<div style="position:absolute;top:624.22px;font:bold 13.33px/13.33px 'Liberation Sans';color:#000;white-space:pre;transform:scaleY(1.103);transform-origin:0 11.28px;right:592.4px">250.00</div>
<div style="position:absolute;top:602.12px;font:bold 13.44px/13.44px 'Liberation Sans';color:#000;white-space:pre;transform:scaleY(1.08);transform-origin:0 11.38px;left:652.55px;width:600px;text-align:center">Vlr Receber</div>
<div class="f" style="left:878px;top:618px;width:124px;height:25px"></div>
<div style="position:absolute;top:624.22px;font:bold 13.33px/13.33px 'Liberation Sans';color:#000;white-space:pre;transform:scaleY(1.103);transform-origin:0 11.28px;right:422px">.00</div>
<div style="position:absolute;top:602.39px;font:bold 13.13px/13.13px 'Liberation Sans';color:#000;white-space:pre;transform:scaleY(1.08);transform-origin:0 11.11px;left:821.2px;width:600px;text-align:center">Vlr Restituir</div>
<div class="f" style="left:1048px;top:618px;width:124px;height:25px"></div>
<div style="position:absolute;top:624.22px;font:bold 13.33px/13.33px 'Liberation Sans';color:#000;white-space:pre;transform:scaleY(1.103);transform-origin:0 11.28px;right:252px">.00</div>
<div style="position:absolute;top:602.54px;font:normal 12.95px/12.95px 'Liberation Sans';color:#000;white-space:pre;transform:scaleY(1.05);transform-origin:0 10.96px;left:1024.9px;width:600px;text-align:center">Data Pagamento</div>
<div class="f" style="left:1261px;top:618px;width:113px;height:25px"></div>
<div style="position:absolute;top:624.98px;font:normal 12.43px/12.43px 'Liberation Sans';color:#000;white-space:pre;transform:scaleY(1.136);transform-origin:0 10.52px;left:1287.5px">12/09/2025</div>
<div style="position:absolute;top:680.77px;font:normal 12.56px/12.56px 'Liberation Sans';color:#000;white-space:pre;transform:scaleY(1.05);transform-origin:0 10.63px;right:1186px">Aprovacao Colaborador</div>
<div class="f" style="left:241px;top:671px;width:189px;height:26px"></div>
<div class="f" style="left:431px;top:671px;width:174px;height:26px"></div>
<div class="f" style="left:606px;top:671px;width:334px;height:26px"></div>
<div style="position:absolute;top:678.76px;font:normal 13.16px/13.16px 'Liberation Sans';color:#000;white-space:pre;transform:scaleY(1.073);transform-origin:0 11.14px;left:640.9px">AGUARDANDO APROVACAO (</div>
<div style="position:absolute;top:681.02px;font:normal 12.5px/12.5px 'Liberation Sans';color:#111;white-space:pre;transform:scaleY(1.15);transform-origin:0 10.58px;left:834.6px">SUPORTE</div>
<div style="position:absolute;top:679.40px;font:normal 13px/13px 'Liberation Sans';color:#000;white-space:pre;transform:scaleY(1.086);transform-origin:0 11.00px;left:900.8px">)</div>
<div class="b be" style="left:942px;top:672px;width:37px;height:25px"></div>
<svg style="position:absolute;left:942px;top:672px;overflow:visible" width="37" height="25" viewBox="0 0 37 25" shape-rendering="crispEdges"><g shape-rendering="auto"><path d="M8.6 9.3 L12 7.3 L14.2 11.3 L22.5 2.5 L25.7 2.5 L14.5 15.8 Z" fill="#555"/><path d="M6.2 8.3 L9.6 6.3 L11.8 10.3 L20.2 1.6 L23.4 1.6 L12.2 14.8 Z" fill="#007400"/></g></svg>
<div class="b bd" style="left:981px;top:672px;width:36px;height:25px"></div>
<svg style="position:absolute;left:981px;top:672px;overflow:visible" width="36" height="25" viewBox="0 0 36 25" shape-rendering="crispEdges"><rect x="8" y="2" width="19" height="19" fill="#dedede"/><g shape-rendering="auto"><path d="M10.5 3.5 L14.5 3.5 L27 18.5 L27 21 L21.5 21 L10 6.5 Z" fill="#9e9e9e"/><path d="M27 2 L27 7 L16.5 21 L9.5 21 Z" fill="#9e9e9e"/><path d="M27 7 L22 12 M27 18.5 L23.5 14.5" stroke="#7a7a7a" stroke-width="0.8"/></g></svg>
<div style="position:absolute;top:707.16px;font:normal 12.69px/12.69px 'Liberation Sans';color:#000;white-space:pre;transform:scaleY(1.05);transform-origin:0 10.74px;right:1186px">Aprovacao Superior</div>
<div class="f" style="left:241px;top:698px;width:189px;height:25px"></div>
<div class="f" style="left:431px;top:698px;width:174px;height:25px"></div>
<div class="f" style="left:606px;top:698px;width:334px;height:25px"></div>
<div style="position:absolute;top:705.16px;font:normal 13.16px/13.16px 'Liberation Sans';color:#000;white-space:pre;transform:scaleY(1.073);transform-origin:0 11.14px;left:640.9px">AGUARDANDO APROVACAO (</div>
<div style="position:absolute;top:707.42px;font:normal 12.5px/12.5px 'Liberation Sans';color:#111;white-space:pre;transform:scaleY(1.15);transform-origin:0 10.58px;left:834.6px">SUPORTE</div>
<div style="position:absolute;top:705.80px;font:normal 13px/13px 'Liberation Sans';color:#000;white-space:pre;transform:scaleY(1.086);transform-origin:0 11.00px;left:900.8px">)</div>
<div class="b be" style="left:942px;top:699px;width:37px;height:24px"></div>
<svg style="position:absolute;left:942px;top:699px;overflow:visible" width="37" height="24" viewBox="0 0 37 24" shape-rendering="crispEdges"><g shape-rendering="auto"><path d="M8.6 9.3 L12 7.3 L14.2 11.3 L22.5 2.5 L25.7 2.5 L14.5 15.8 Z" fill="#555"/><path d="M6.2 8.3 L9.6 6.3 L11.8 10.3 L20.2 1.6 L23.4 1.6 L12.2 14.8 Z" fill="#007400"/></g></svg>
<div class="b bd" style="left:981px;top:699px;width:36px;height:24px"></div>
<svg style="position:absolute;left:981px;top:699px;overflow:visible" width="36" height="24" viewBox="0 0 36 24" shape-rendering="crispEdges"><rect x="8" y="2" width="19" height="19" fill="#dedede"/><g shape-rendering="auto"><path d="M10.5 3.5 L14.5 3.5 L27 18.5 L27 21 L21.5 21 L10 6.5 Z" fill="#9e9e9e"/><path d="M27 2 L27 7 L16.5 21 L9.5 21 Z" fill="#9e9e9e"/><path d="M27 7 L22 12 M27 18.5 L23.5 14.5" stroke="#7a7a7a" stroke-width="0.8"/></g></svg>
<div class="b be" style="left:1020px;top:699px;width:35px;height:24px"></div>
<svg style="position:absolute;left:1020px;top:699px;overflow:visible" width="35" height="24" viewBox="0 0 35 24" shape-rendering="crispEdges"><g shape-rendering="auto"><path d="M9 2.5 L13 2.5 L25.5 18.8 L21 18.8 Z M26 1.5 L26 4.5 L14 19.5 L8 19.5 Z" fill="#888" transform="translate(2.2,0.5)"/><path d="M9 2.5 L13 2.5 L25.5 18.8 L21 18.8 Z M26 1.5 L26 4.5 L14 19.5 L8 19.5 Z" fill="#000" transform="translate(1.2,0.3)"/><path d="M8 2.5 L12 2.5 L24.5 18.8 L20 18.8 Z" fill="#ffff00"/><path d="M25 1.5 L25 4.5 L13 19.5 L7 19.5 Z" fill="#ffff00"/></g></svg>
<div style="position:absolute;top:732.81px;font:bold 13.34px/13.34px 'Liberation Sans';color:#000;white-space:pre;transform:scaleY(1.08);transform-origin:0 11.29px;right:1186px">Gestor Caixa</div>
<div class="f" style="left:241px;top:724px;width:189px;height:26px"></div>
<div class="f" style="left:431px;top:724px;width:174px;height:26px"></div>
<div class="f" style="left:606px;top:724px;width:334px;height:26px"></div>
<div style="position:absolute;top:730.76px;font:normal 13.16px/13.16px 'Liberation Sans';color:#000;white-space:pre;transform:scaleY(1.073);transform-origin:0 11.14px;left:640.9px">AGUARDANDO APROVACAO (</div>
<div style="position:absolute;top:733.02px;font:normal 12.5px/12.5px 'Liberation Sans';color:#111;white-space:pre;transform:scaleY(1.15);transform-origin:0 10.58px;left:834.6px">SUPORTE</div>
<div style="position:absolute;top:731.40px;font:normal 13px/13px 'Liberation Sans';color:#000;white-space:pre;transform:scaleY(1.086);transform-origin:0 11.00px;left:900.8px">)</div>
<div class="b be" style="left:942px;top:725px;width:37px;height:25px"></div>
<svg style="position:absolute;left:942px;top:725px;overflow:visible" width="37" height="25" viewBox="0 0 37 25" shape-rendering="crispEdges"><g shape-rendering="auto"><path d="M8.6 9.3 L12 7.3 L14.2 11.3 L22.5 2.5 L25.7 2.5 L14.5 15.8 Z" fill="#555"/><path d="M6.2 8.3 L9.6 6.3 L11.8 10.3 L20.2 1.6 L23.4 1.6 L12.2 14.8 Z" fill="#007400"/></g></svg>
<div class="b be" style="left:1020px;top:725px;width:35px;height:25px"></div>
<svg style="position:absolute;left:1020px;top:725px;overflow:visible" width="35" height="25" viewBox="0 0 35 25" shape-rendering="crispEdges"><g shape-rendering="auto"><path d="M9 2.5 L13 2.5 L25.5 18.8 L21 18.8 Z M26 1.5 L26 4.5 L14 19.5 L8 19.5 Z" fill="#888" transform="translate(2.2,0.5)"/><path d="M9 2.5 L13 2.5 L25.5 18.8 L21 18.8 Z M26 1.5 L26 4.5 L14 19.5 L8 19.5 Z" fill="#000" transform="translate(1.2,0.3)"/><path d="M8 2.5 L12 2.5 L24.5 18.8 L20 18.8 Z" fill="#ffff00"/><path d="M25 1.5 L25 4.5 L13 19.5 L7 19.5 Z" fill="#ffff00"/></g></svg>
<div style="position:absolute;left:5px;top:787px;width:1416px;height:1px;background:#7090b8"></div>
<div style="position:absolute;left:5px;top:788px;width:143px;height:23px;background:#cad7ea;border-radius:0 0 5px 5px"></div>
<div style="position:absolute;top:793.72px;font:normal 12.97px/12.97px 'Liberation Sans';color:#2b2b2b;white-space:pre;transform:scaleY(1.089);transform-origin:0 10.98px;left:13.9px">Solicitacao Numerario</div>
<div style="position:absolute;left:151px;top:787px;width:140px;height:24px;box-sizing:border-box;background:#93b5da;border-left:1px solid #6f8fb8;border-right:1px solid #6f8fb8;border-bottom:1px solid #6f8fb8;border-radius:0 0 5px 5px"></div>
<div style="position:absolute;top:793.83px;font:normal 12.84px/12.84px 'Liberation Sans';color:#000;white-space:pre;transform:scaleY(1.1);transform-origin:0 10.87px;left:171.1px">Acerto Numerario</div>
<div style="position:absolute;left:294px;top:788px;width:140px;height:23px;background:#cad7ea;border-radius:0 0 5px 5px"></div>
<div style="position:absolute;top:793.89px;font:normal 12.77px/12.77px 'Liberation Sans';color:#2b2b2b;white-space:pre;transform:scaleY(1.106);transform-origin:0 10.81px;left:300.7px">Reembolso Numerario</div>
<div style="position:absolute;left:437px;top:788px;width:140px;height:23px;background:#cad7ea;border-radius:0 0 5px 5px"></div>
<div style="position:absolute;top:793.97px;font:normal 12.68px/12.68px 'Liberation Sans';color:#2b2b2b;white-space:pre;transform:scaleY(1.114);transform-origin:0 10.73px;left:464px">Conta Corrente</div>
<div style="position:absolute;left:580px;top:788px;width:140px;height:23px;background:#cad7ea;border-radius:0 0 5px 5px"></div>
<div style="position:absolute;top:793.95px;font:normal 12.7px/12.7px 'Liberation Sans';color:#2b2b2b;white-space:pre;transform:scaleY(1.112);transform-origin:0 10.75px;left:621.2px">Cadastros</div>
<div style="position:absolute;left:723px;top:788px;width:140px;height:23px;background:#cad7ea;border-radius:0 0 5px 5px"></div>
<div style="position:absolute;top:793.96px;font:normal 12.69px/12.69px 'Liberation Sans';color:#2b2b2b;white-space:pre;transform:scaleY(1.113);transform-origin:0 10.74px;left:768.2px">Consulta</div>
<div style="position:absolute;left:866px;top:788px;width:140px;height:23px;background:#cad7ea;border-radius:0 0 5px 5px"></div>
<div style="position:absolute;top:793.88px;font:normal 12.78px/12.78px 'Liberation Sans';color:#2b2b2b;white-space:pre;transform:scaleY(1.105);transform-origin:0 10.82px;left:893.3px">Gerenciamento</div>
<div style="position:absolute;left:1009px;top:788px;width:140px;height:23px;background:#cad7ea;border-radius:0 0 5px 5px"></div>
<div style="position:absolute;top:793.87px;font:normal 12.79px/12.79px 'Liberation Sans';color:#2b2b2b;white-space:pre;transform:scaleY(1.104);transform-origin:0 10.83px;left:1050.9px">Relatorios</div></body></html>
